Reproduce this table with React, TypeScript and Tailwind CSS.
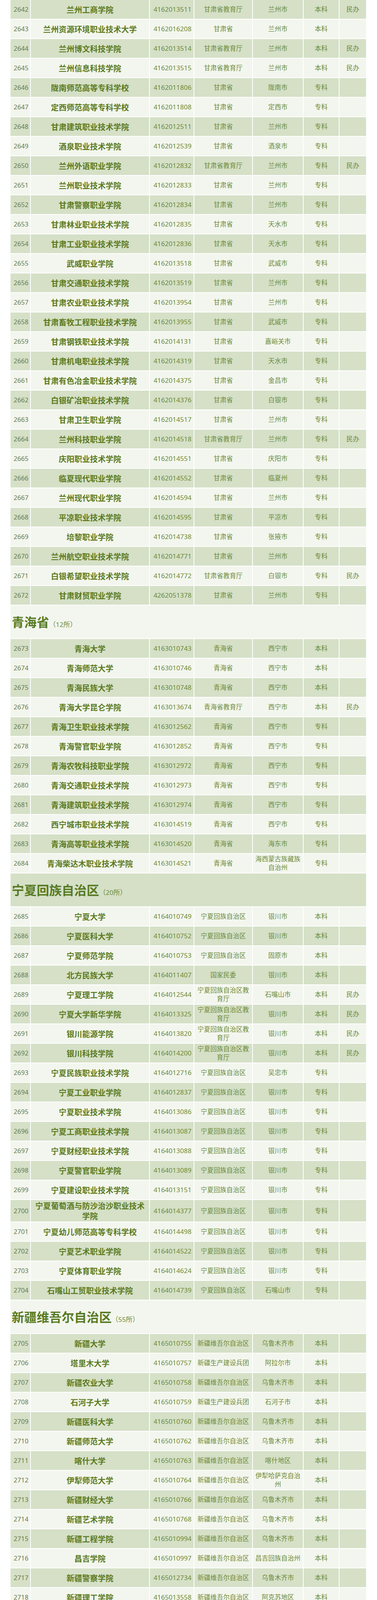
const SECTIONS: { title?: string; count?: string; rows: string[] }[] = [
  {
    rows: [
      "2642|兰州工商学院|4162013511|甘肃省教育厅|兰州市|本科|民办",
      "2643|兰州资源环境职业技术大学|4162016208|甘肃省|兰州市|本科|",
      "2644|兰州博文科技学院|4162013514|甘肃省教育厅|兰州市|本科|民办",
      "2645|兰州信息科技学院|4162013515|甘肃省教育厅|兰州市|本科|民办",
      "2646|陇南师范高等专科学校|4162011806|甘肃省|陇南市|专科|",
      "2647|定西师范高等专科学校|4162011808|甘肃省|定西市|专科|",
      "2648|甘肃建筑职业技术学院|4162012511|甘肃省|兰州市|专科|",
      "2649|酒泉职业技术学院|4162012539|甘肃省|酒泉市|专科|",
      "2650|兰州外语职业学院|4162012832|甘肃省教育厅|兰州市|专科|民办",
      "2651|兰州职业技术学院|4162012833|甘肃省|兰州市|专科|",
      "2652|甘肃警察职业学院|4162012834|甘肃省|兰州市|专科|",
      "2653|甘肃林业职业技术学院|4162012835|甘肃省|天水市|专科|",
      "2654|甘肃工业职业技术学院|4162012836|甘肃省|天水市|专科|",
      "2655|武威职业学院|4162013518|甘肃省|武威市|专科|",
      "2656|甘肃交通职业技术学院|4162013519|甘肃省|兰州市|专科|",
      "2657|甘肃农业职业技术学院|4162013954|甘肃省|兰州市|专科|",
      "2658|甘肃畜牧工程职业技术学院|4162013955|甘肃省|武威市|专科|",
      "2659|甘肃钢铁职业技术学院|4162014131|甘肃省|嘉峪关市|专科|",
      "2660|甘肃机电职业技术学院|4162014319|甘肃省|天水市|专科|",
      "2661|甘肃有色冶金职业技术学院|4162014375|甘肃省|金昌市|专科|",
      "2662|白银矿冶职业技术学院|4162014376|甘肃省|白银市|专科|",
      "2663|甘肃卫生职业学院|4162014517|甘肃省|兰州市|专科|",
      "2664|兰州科技职业学院|4162014518|甘肃省教育厅|兰州市|专科|民办",
      "2665|庆阳职业技术学院|4162014551|甘肃省|庆阳市|专科|",
      "2666|临夏现代职业学院|4162014552|甘肃省|临夏州|专科|",
      "2667|兰州现代职业学院|4162014594|甘肃省|兰州市|专科|",
      "2668|平凉职业技术学院|4162014595|甘肃省|平凉市|专科|",
      "2669|培黎职业学院|4162014738|甘肃省|张掖市|专科|",
      "2670|兰州航空职业技术学院|4162014771|甘肃省|兰州市|专科|",
      "2671|白银希望职业技术学院|4162014772|甘肃省教育厅|白银市|专科|民办",
      "2672|甘肃财贸职业学院|4262051378|甘肃省|兰州市|专科|",
    ],
  },
  {
    title: "青海省",
    count: "12",
    rows: [
      "2673|青海大学|4163010743|青海省|西宁市|本科|",
      "2674|青海师范大学|4163010746|青海省|西宁市|本科|",
      "2675|青海民族大学|4163010748|青海省|西宁市|本科|",
      "2676|青海大学昆仑学院|4163013674|青海省教育厅|西宁市|本科|民办",
      "2677|青海卫生职业技术学院|4163012562|青海省|西宁市|专科|",
      "2678|青海警官职业学院|4163012852|青海省|西宁市|专科|",
      "2679|青海农牧科技职业学院|4163012972|青海省|西宁市|专科|",
      "2680|青海交通职业技术学院|4163012973|青海省|西宁市|专科|",
      "2681|青海建筑职业技术学院|4163012974|青海省|西宁市|专科|",
      "2682|西宁城市职业技术学院|4163014519|青海省|西宁市|专科|",
      "2683|青海高等职业技术学院|4163014520|青海省|海东市|专科|",
      "2684|青海柴达木职业技术学院|4163014521|青海省|海西蒙古族藏族自治州|专科|",
    ],
  },
  {
    title: "宁夏回族自治区",
    count: "20",
    rows: [
      "2685|宁夏大学|4164010749|宁夏回族自治区|银川市|本科|",
      "2686|宁夏医科大学|4164010752|宁夏回族自治区|银川市|本科|",
      "2687|宁夏师范学院|4164010753|宁夏回族自治区|固原市|本科|",
      "2688|北方民族大学|4164011407|国家民委|银川市|本科|",
      "2689|宁夏理工学院|4164012544|宁夏回族自治区教育厅|石嘴山市|本科|民办",
      "2690|宁夏大学新华学院|4164013325|宁夏回族自治区教育厅|银川市|本科|民办",
      "2691|银川能源学院|4164013820|宁夏回族自治区教育厅|银川市|本科|民办",
      "2692|银川科技学院|4164014200|宁夏回族自治区教育厅|银川市|本科|民办",
      "2693|宁夏民族职业技术学院|4164012716|宁夏回族自治区|吴忠市|专科|",
      "2694|宁夏工业职业学院|4164012837|宁夏回族自治区|银川市|专科|",
      "2695|宁夏职业技术学院|4164013086|宁夏回族自治区|银川市|专科|",
      "2696|宁夏工商职业技术学院|4164013087|宁夏回族自治区|银川市|专科|",
      "2697|宁夏财经职业技术学院|4164013088|宁夏回族自治区|银川市|专科|",
      "2698|宁夏警官职业学院|4164013089|宁夏回族自治区|银川市|专科|",
      "2699|宁夏建设职业技术学院|4164013151|宁夏回族自治区|银川市|专科|",
      "2700|宁夏葡萄酒与防沙治沙职业技术学院|4164014377|宁夏回族自治区|银川市|专科|",
      "2701|宁夏幼儿师范高等专科学校|4164014498|宁夏回族自治区|银川市|专科|",
      "2702|宁夏艺术职业学院|4164014522|宁夏回族自治区|银川市|专科|",
      "2703|宁夏体育职业学院|4164014624|宁夏回族自治区|银川市|专科|",
      "2704|石嘴山工贸职业技术学院|4164014739|宁夏回族自治区|石嘴山市|专科|",
    ],
  },
  {
    title: "新疆维吾尔自治区",
    count: "55",
    rows: [
      "2705|新疆大学|4165010755|新疆维吾尔自治区|乌鲁木齐市|本科|",
      "2706|塔里木大学|4165010757|新疆生产建设兵团|阿拉尔市|本科|",
      "2707|新疆农业大学|4165010758|新疆维吾尔自治区|乌鲁木齐市|本科|",
      "2708|石河子大学|4165010759|新疆生产建设兵团|石河子市|本科|",
      "2709|新疆医科大学|4165010760|新疆维吾尔自治区|乌鲁木齐市|本科|",
      "2710|新疆师范大学|4165010762|新疆维吾尔自治区|乌鲁木齐市|本科|",
      "2711|喀什大学|4165010763|新疆维吾尔自治区|喀什地区|本科|",
      "2712|伊犁师范大学|4165010764|新疆维吾尔自治区|伊犁哈萨克自治州|本科|",
      "2713|新疆财经大学|4165010766|新疆维吾尔自治区|乌鲁木齐市|本科|",
      "2714|新疆艺术学院|4165010768|新疆维吾尔自治区|乌鲁木齐市|本科|",
      "2715|新疆工程学院|4165010994|新疆维吾尔自治区|乌鲁木齐市|本科|",
      "2716|昌吉学院|4165010997|新疆维吾尔自治区|昌吉回族自治州|本科|",
      "2717|新疆警察学院|4165012734|新疆维吾尔自治区|乌鲁木齐市|本科|",
      "2718|新疆理工学院|4165013558|新疆维吾尔自治区|阿克苏地区|本科|",
      "2719|新疆农业大学科学技术学院|4165013559|新疆维吾尔自治区教育厅|乌鲁木齐市|本科|民办",
      "2720|新疆第二医学院|4165013560|新疆维吾尔自治区|克拉玛依市|本科|",
      "2721|新疆科技学院|4165013561|新疆维吾尔自治区|巴音郭楞蒙古自治州|本科|",
      "2722|新疆政法学院|4165013628|新疆生产建设兵团|图木舒克市|本科|",
      "2723|新疆天山职业技术大学|4165013727|新疆维吾尔自治区教育厅|乌鲁木齐市|本科|民办",
      "2724|和田师范专科学校|4165010765|新疆维吾尔自治区|和田地区|专科|",
      "2725|新疆农业职业技术学院|4165010995|新疆维吾尔自治区|昌吉回族自治州|专科|",
      "2726|乌鲁木齐职业大学|4165011565|新疆维吾尔自治区|乌鲁木齐市|专科|",
      "2727|新疆维吾尔医学专科学校|4165011818|新疆维吾尔自治区|和田地区|专科|",
      "2728|克拉玛依职业技术学院|4165012482|新疆维吾尔自治区|克拉玛依市|专科|",
      "2729|新疆机电职业技术学院|4165012513|新疆维吾尔自治区|乌鲁木齐市|专科|",
      "2730|新疆轻工职业技术学院|4165012514|新疆维吾尔自治区|乌鲁木齐市|专科|",
      "2731|新疆能源职业技术学院|4165012570|新疆维吾尔自治区教育厅|乌鲁木齐市|专科|民办",
      "2732|昌吉职业技术学院|4165012838|新疆维吾尔自治区|昌吉回族自治州|专科|",
      "2733|伊犁职业技术学院|4165012975|新疆维吾尔自治区|伊犁哈萨克自治州|专科|",
      "2734|阿克苏职业技术学院|4165013093|新疆维吾尔自治区|阿克苏地区|专科|",
      "2735|巴音郭楞职业技术学院|4165013094|新疆维吾尔自治区|巴音郭楞蒙古自治州|专科|",
      "2736|新疆建设职业技术学院|4165013562|新疆维吾尔自治区|乌鲁木齐市|专科|",
      "2737|新疆现代职业技术学院|4165013726|新疆维吾尔自治区教育厅|乌鲁木齐市|专科|民办",
      "2738|新疆交通职业技术学院|4165013926|新疆维吾尔自治区|乌鲁木齐市|专科|",
      "2739|新疆石河子职业技术学院|4165013956|新疆生产建设兵团|石河子市|专科|",
      "2740|新疆职业大学|4165014138|新疆维吾尔自治区|乌鲁木齐市|专科|",
      "2741|新疆体育职业技术学院|4165014416|新疆维吾尔自治区|乌鲁木齐市|专科|",
      "2742|新疆应用职业技术学院|4165014417|新疆维吾尔自治区|伊犁哈萨克自治州|专科|",
      "2743|新疆师范高等专科学校|4165014421|新疆维吾尔自治区|乌鲁木齐市|专科|",
      "2744|新疆铁道职业技术学院|4165014489|新疆维吾尔自治区|乌鲁木齐市|专科|",
      "2745|新疆生产建设兵团兴新职业技术学院|4165014523|新疆生产建设兵团|乌鲁木齐市|专科|",
      "2746|哈密职业技术学院|4165014524|新疆维吾尔自治区|哈密市|专科|",
      "2747|新疆科技职业技术学院|4165014525|新疆维吾尔自治区教育厅|五家渠市|专科|民办",
      "2748|吐鲁番职业技术学院|4165014585|新疆维吾尔自治区|吐鲁番市|专科|",
      "2749|博尔塔拉职业技术学院|4165014622|新疆维吾尔自治区|博尔塔拉蒙古自治州|专科|",
      "2750|和田职业技术学院|4165014652|新疆维吾尔自治区|和田地区|专科|",
      "2751|石河子工程职业技术学院|4165014661|新疆生产建设兵团|石河子市|专科|",
      "2752|喀什职业技术学院|4165014677|新疆维吾尔自治区|喀什地区|专科|",
      "2753|克孜勒苏职业技术学院|4165014678|新疆维吾尔自治区|克孜勒苏柯尔克孜自治州|专科|",
      "2754|新疆科信职业技术学院|4165014679|新疆维吾尔自治区教育厅|乌鲁木齐市|专科|民办",
      "2755|阿勒泰职业技术学院|4165014680|新疆维吾尔自治区|阿勒泰地区|专科|",
      "2756|塔城职业技术学院|4165014740|新疆维吾尔自治区|塔城地区|专科|",
      "2757|塔里木职业技术学院|4165014741|新疆生产建设兵团|阿拉尔市|专科|",
      "2758|新疆工业职业技术学院|4265051060|新疆维吾尔自治区|乌鲁木齐市|专科|",
      "2759|铁门关职业技术学院|4165014660|新疆生产建设兵团|铁门关市|专科|",
    ],
  },
];

const DARK = "bg-[#d5e0c7]";
const LIGHT = "bg-[#f3f6ee]";

function Cell({ bg, className, children }: { bg: string; className?: string; children?: React.ReactNode }) {
  return (
    <div className={`${bg} flex items-center justify-center text-center px-[2px] ${className ?? ""}`}>
      {children}
    </div>
  );
}

function Row({ cols, bg }: { cols: string[]; bg: string }) {
  const [no, name, code, dept, city, level, kind] = cols;
  return (
    <div className="grid grid-cols-[50px_303px_112px_148px_128px_90px_68px] gap-[2px] min-h-[48px]">
      <Cell bg={bg} className="text-[16.5px] leading-[22px] text-[#6b7a48] pl-[6px]">{no}</Cell>
      <Cell bg={bg} className="text-[20px] leading-[26px] font-bold text-[#5b7a20] px-[8px] pt-[3px]">{name}</Cell>
      <Cell bg={bg} className="text-[17px] leading-[22px] text-[#6c8a3b] pl-[6px]">{code}</Cell>
      <Cell bg={bg} className="text-[16.5px] leading-[22px] text-[#6c8a3b]">{dept}</Cell>
      <Cell bg={bg} className="text-[16.5px] leading-[22px] text-[#6c8a3b]">{city}</Cell>
      <Cell bg={bg} className="text-[16.5px] leading-[22px] text-[#6c8a3b]">{level}</Cell>
      <Cell bg={bg} className="text-[16.5px] leading-[22px] text-[#6c8a3b]">{kind}</Cell>
    </div>
  );
}

export default function App() {
  let i = 0;
  const items: React.ReactNode[] = [];
  SECTIONS.forEach((s) => {
    if (s.title) {
      const bg = i % 2 === 0 ? DARK : LIGHT;
      items.push(
        <div key={s.title} className={`${bg} h-[84px] flex items-center pl-[3px]`}>
          <div className="flex items-baseline pt-[2px]">
            <span className="text-[32px] font-bold text-[#587a22] leading-[40px]">{s.title}</span>
            <span className="text-[17px] text-[#6c8a3b] leading-[22px]">（{s.count}所）</span>
          </div>
        </div>
      );
      i++;
    }
    s.rows.forEach((r) => {
      const cols = r.split("|");
      items.push(<Row key={cols[0]} cols={cols} bg={i % 2 === 0 ? DARK : LIGHT} />);
      i++;
    });
  });

  return (
    <div
      className="bg-white pl-[27px] pb-[20px]"
      style={{ fontFamily: '"Noto Sans", "Noto Sans CJK SC", sans-serif' }}
    >
      <div className="w-[911px] flex flex-col gap-[2px]">{items}</div>
    </div>
  );
}
